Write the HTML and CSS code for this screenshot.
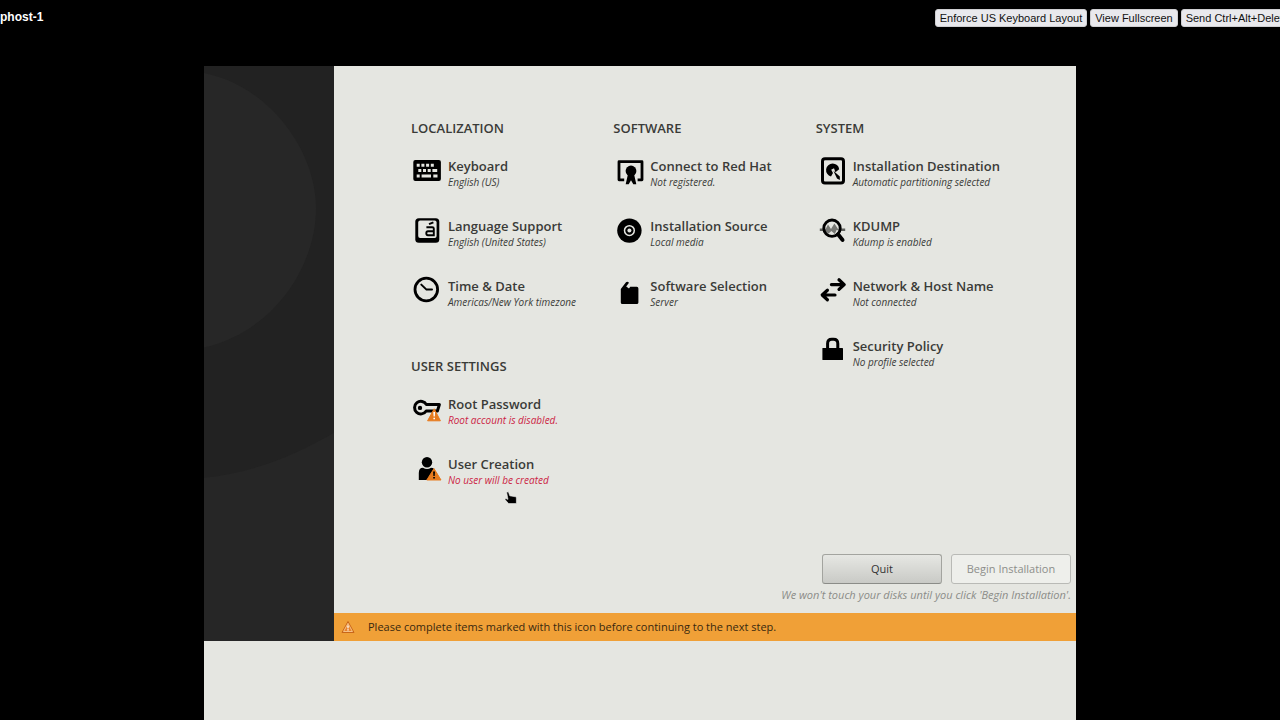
FILE: index.html
```html
<!DOCTYPE html>
<html lang="en">
<head>
<meta charset="utf-8">
<title>phost-1</title>
<link rel="stylesheet" href="styles.css">
</head>
<body>
<header class="console-bar">
  <h1 class="host">phost-1</h1>
  <div class="console-actions">
    <button class="console-btn" type="button">Enforce US Keyboard Layout</button>
    <button class="console-btn" type="button">View Fullscreen</button>
    <button class="console-btn" type="button">Send Ctrl+Alt+Delete</button>
  </div>
</header>
<main class="screen">
  <div class="installer">
    <aside class="side">
      <svg class="side-art" viewBox="0 0 130 574" preserveAspectRatio="none" aria-hidden="true">
        <path fill="#272727" d="M0 7C66 20 112 85 112 142C112 200 70 265 0 281Z"/>
        <path fill="#262626" d="M0 411C50 406 92 388 130 366V574H0Z"/>
      </svg>
    </aside>
    <div class="hub">
      <div class="columns">
        <div class="column">
          <section class="group">
            <h2 class="group-title">LOCALIZATION</h2>
            <button class="spoke" type="button">
              <svg class="icon" viewBox="0 0 32 32" aria-hidden="true"><rect x="2.3" y="5" width="27.6" height="21" rx="2"/><path fill="#e5e6e1" d="M5.7 8.7h3v3h-3zM10.4 8.7h3v3h-3zM15.1 8.7h3v3h-3zM19.8 8.7h3v3h-3zM7.3 14h3v3h-3zM12 14h3v3h-3zM16.7 14h3v3h-3zM21.4 14h4.8v3h-4.8zM5.7 19.5h3v3h-3zM10.6 19.5h9.4v3h-9.4zM22.3 19.5h4.2v3h-4.2z"/></svg>
              <span class="label"><span class="name">Keyboard</span><span class="status">English (US)</span></span>
            </button>
            <button class="spoke" type="button">
              <svg class="icon" viewBox="0 0 32 32" aria-hidden="true"><rect x="4.3" y="3.3" width="24" height="24.4" rx="3.5"/><rect x="7.2" y="5.4" width="18.4" height="17.6" rx="2" fill="#e5e6e1"/><g fill="none" stroke="#000" stroke-width="1.9"><path d="M15.4 12.2h5.8q1.6 0 1.6 1.4v6.7h-5.8q-1.7 0-1.7-2t1.7-2h5.6M18 9.2l4.4-1.9"/></g></svg>
              <span class="label"><span class="name">Language Support</span><span class="status">English (United States)</span></span>
            </button>
            <button class="spoke" type="button">
              <svg class="icon" viewBox="0 0 32 32" aria-hidden="true"><g fill="none" stroke="#000"><circle cx="15.3" cy="14.5" r="11.3" stroke-width="2.8"/><path stroke-width="2" stroke-linecap="round" stroke-linejoin="round" d="M10.3 9.6l5.2 5H21"/></g></svg>
              <span class="label"><span class="name">Time &amp; Date</span><span class="status">Americas/New York timezone</span></span>
            </button>
          </section>
          <section class="group">
            <h2 class="group-title">USER SETTINGS</h2>
            <button class="spoke" type="button">
              <svg class="icon" viewBox="0 0 32 32" aria-hidden="true"><path fill="none" stroke="#000" stroke-width="3" stroke-linejoin="round" d="M15.4 11.6H28.4L26.4 18H15.2A6.3 6.3 0 1 1 15.4 11.6Z"/><circle cx="9" cy="14.9" r="2.2"/><path fill="#e77b1e" stroke="#e77b1e" stroke-linejoin="round" d="M23.2 15.8L29.4 27.8H16.6Z"/><path fill="#fff" d="M22.3 19h1.8l-.3 4.6h-1.2zM22.4 24.7h1.6v1.5h-1.6z"/></svg>
              <span class="label"><span class="name">Root Password</span><span class="status status-alert">Root account is disabled.</span></span>
            </button>
            <button class="spoke" type="button">
              <svg class="icon" viewBox="0 0 32 32" aria-hidden="true"><circle cx="16" cy="9.2" r="5.2"/><path d="M7.8 27V20Q7.8 14.8 12 14.8Q16 17.4 20 14.8Q24.2 14.8 24.2 20V27Z"/><path fill="#e77b1e" stroke="#e77b1e" stroke-linejoin="round" d="M23 15.6L30 27H15.8Z"/><path d="M22.1 18.5h1.9l-.3 4.4h-1.3zM22.2 24h1.7v1.6h-1.7z"/></svg>
              <span class="label"><span class="name">User Creation</span><span class="status status-alert">No user will be created</span></span>
            </button>
          </section>
        </div>
        <div class="column">
          <section class="group">
            <h2 class="group-title">SOFTWARE</h2>
            <button class="spoke" type="button">
              <svg class="icon" viewBox="0 0 32 32" aria-hidden="true"><path fill="none" stroke="#000" stroke-width="2.8" stroke-linejoin="round" d="M11.2 24.8H6V6.7H29V24.8H24.6"/><circle cx="18" cy="16" r="5.4"/><path d="M15 19H21L23.3 29.2H20.3L18 25.3L15.7 29.2H12.7Z"/></svg>
              <span class="label"><span class="name">Connect to Red Hat</span><span class="status">Not registered.</span></span>
            </button>
            <button class="spoke" type="button">
              <svg class="icon" viewBox="0 0 32 32" aria-hidden="true"><circle cx="16.4" cy="15.6" r="12.2"/><circle cx="16.4" cy="15.6" r="4.9" fill="none" stroke="#e5e6e1" stroke-width="1.5"/><circle cx="16.4" cy="15.6" r="2" fill="#e5e6e1"/></svg>
              <span class="label"><span class="name">Installation Source</span><span class="status">Local media</span></span>
            </button>
            <button class="spoke" type="button">
              <svg class="icon" viewBox="0 0 32 32" aria-hidden="true"><path d="M7.8 14L13 7.2Q14.5 6.2 16 7.8L13.2 11.6L16 13.4L17.2 11.8H23.8Q25.4 11.8 25.4 13.4V27.4Q25.4 29 23.8 29H9.4Q7.8 29 7.8 27.4Z"/></svg>
              <span class="label"><span class="name">Software Selection</span><span class="status">Server</span></span>
            </button>
          </section>
        </div>
        <div class="column">
          <section class="group">
            <h2 class="group-title">SYSTEM</h2>
            <button class="spoke" type="button">
              <svg class="icon" viewBox="0 0 32 32" aria-hidden="true"><rect x="6.5" y="3.7" width="21" height="24.2" rx="2.5" fill="none" stroke="#000" stroke-width="3"/><path d="M15 21.5A6.6 6.6 0 1 1 23.2 14.2L19.4 17.2L18 13.2L15.2 14.8L17 18Z"/><path d="M17.4 15.8L23.8 21.4V25L21 23.6Z"/></svg>
              <span class="label"><span class="name">Installation Destination</span><span class="status">Automatic partitioning selected</span></span>
            </button>
            <button class="spoke" type="button">
              <svg class="icon" viewBox="0 0 32 32" aria-hidden="true"><path fill="none" stroke="#5d5e5b" stroke-width="2.4" d="M3.8 14.7H9M23 14.7H29.2"/><path fill="#777874" d="M8.6 16L12 9.6L15 14L18.4 8.4L23 15.6L20.6 15L18.8 19L15.4 16L12.6 18.6Z"/><circle cx="16" cy="13.2" r="8.2" fill="none" stroke="#000" stroke-width="2.9"/><path stroke="#000" stroke-width="3.8" stroke-linecap="round" d="M22 19.2L26.6 25"/></svg>
              <span class="label"><span class="name">KDUMP</span><span class="status">Kdump is enabled</span></span>
            </button>
            <button class="spoke" type="button">
              <svg class="icon" viewBox="0 0 32 32" aria-hidden="true"><path fill="none" stroke="#000" stroke-width="3.2" stroke-linecap="round" stroke-linejoin="round" d="M15.4 9.6H28M23 4.8L28.2 9.6L23 14.4M19 20H6.4M11.4 15.2L6.2 20L11.4 24.8"/></svg>
              <span class="label"><span class="name">Network &amp; Host Name</span><span class="status">Not connected</span></span>
            </button>
            <button class="spoke" type="button">
              <svg class="icon" viewBox="0 0 32 32" aria-hidden="true"><rect x="6.4" y="13" width="20.6" height="12" rx=".6"/><path fill="none" stroke="#000" stroke-width="3" d="M11.6 14V8.4Q11.6 4.2 15.8 4.2H17.6Q21.8 4.2 21.8 8.4V14"/></svg>
              <span class="label"><span class="name">Security Policy</span><span class="status">No profile selected</span></span>
            </button>
          </section>
        </div>
      </div>
      <div class="actions">
        <div class="action-row">
          <button class="btn" type="button">Quit</button>
          <button class="btn" type="button" disabled>Begin Installation</button>
        </div>
        <p class="note">We won't touch your disks until you click 'Begin Installation'.</p>
      </div>
      <div class="notice" role="status">
        <svg class="notice-icon" viewBox="0 0 14 14" aria-hidden="true"><path fill="#e8822a" stroke="#c8661a" stroke-linejoin="round" d="M7 1.5L13 12.5H1Z"/><path fill="none" stroke="#f8cf9c" stroke-width=".8" d="M7 3.4L11.4 11.5H2.6Z"/><path fill="#fff" d="M6.2 5.5h1.6l-.3 3h-1zM6.3 9.2h1.4v1.3h-1.4z"/></svg>
        <span>Please complete items marked with this icon before continuing to the next step.</span>
      </div>
    </div>
  </div>
  <svg class="pointer" viewBox="0 0 14 14" aria-hidden="true"><path stroke="#f4f4f1" stroke-width=".6" d="M2.6 1.2L4.4.8L5.8 4.8L11.6 5.8Q12.6 6.2 12.4 8V12.6H4.6L1 8.6L2 7.6L4 8.4Z"/></svg>
</main>
</body>
</html>
```
FILE: styles.css
```css
* { box-sizing: border-box; }

body {
  margin: 0;
  min-height: 100vh;
  display: flex;
  flex-direction: column;
  background: #000;
  color: #3a3b38;
  font-family: "Open Sans", "Noto Sans", sans-serif;
  overflow: hidden;
}

h1, h2, p { margin: 0; }

.console-bar {
  display: flex;
  justify-content: space-between;
  align-items: flex-start;
  padding: 9px 0 0;
  height: 66px;
  flex: none;
}

.host {
  color: #fff;
  font: bold 12px/16px "Liberation Sans", Arial, sans-serif;
}

.console-actions {
  display: flex;
  gap: 3px;
  margin-right: -14px;
}

.console-btn {
  flex: none;
  height: 18px;
  padding: 0 4px;
  border: 1px solid #cfcfd2;
  border-radius: 3px;
  background: #e9e9ed;
  color: #111;
  font: 11px/16px "Liberation Sans", Arial, sans-serif;
  white-space: nowrap;
}

.screen {
  position: relative;
  flex: 1;
  margin: 0 204px;
  background: #e5e6e1;
}

.installer { display: flex; }

.side {
  flex: 0 0 130px;
  background: #222;
  display: flex;
}

.side-art {
  width: 100%;
  contain: size;
}

.hub {
  flex: 1;
  display: flex;
  flex-direction: column;
}

.columns {
  display: grid;
  grid-template-columns: repeat(3, 1fr);
  padding: 53px 58px 0 77px;
}

.column {
  display: flex;
  flex-direction: column;
  gap: 50px;
}

.group {
  display: flex;
  flex-direction: column;
  align-items: flex-start;
  gap: 28px;
}

.group-title {
  margin-bottom: -10px;
  font-size: 13px;
  line-height: 18px;
  font-weight: 600;
}

.spoke {
  display: flex;
  align-items: flex-start;
  gap: 5px;
  height: 32px;
  padding: 0;
  border: 0;
  background: none;
  color: inherit;
  font: inherit;
  text-align: left;
  white-space: nowrap;
}

.icon {
  flex: none;
  width: 32px;
  height: 32px;
}

.label {
  display: flex;
  flex-direction: column;
  padding-top: 3px;
}

.name {
  font-size: 13px;
  line-height: 16px;
  font-weight: 600;
}

.status {
  font-size: 10px;
  line-height: 16px;
  font-style: italic;
}

.status-alert { color: #cc1f45; }

.actions {
  display: flex;
  flex-direction: column;
  align-items: flex-end;
  gap: 3px;
  padding: 69px 5px 10px;
}

.action-row {
  display: flex;
  gap: 9px;
}

.btn {
  width: 120px;
  height: 30px;
  border: 1px solid #a3a49f;
  border-bottom-color: #8b8c88;
  border-radius: 3px;
  background: linear-gradient(#e6e7e3, #c9cac6);
  color: #333;
  font: 11px/16px "Open Sans", "Noto Sans", sans-serif;
}

.btn:disabled {
  border-color: #b9bab6;
  background: #eeefeb;
  color: #8d8e8a;
}

.note {
  color: #8b8c88;
  font-size: 11px;
  line-height: 16px;
  font-style: italic;
}

.notice {
  display: flex;
  align-items: center;
  gap: 13px;
  height: 28px;
  padding-left: 7px;
  background: #f0a037;
  color: #38280f;
  font-size: 11px;
  line-height: 16px;
}

.notice-icon {
  width: 14px;
  height: 14px;
}

.pointer {
  position: absolute;
  left: 300px;
  top: 425px;
  width: 14px;
  height: 14px;
}
```
